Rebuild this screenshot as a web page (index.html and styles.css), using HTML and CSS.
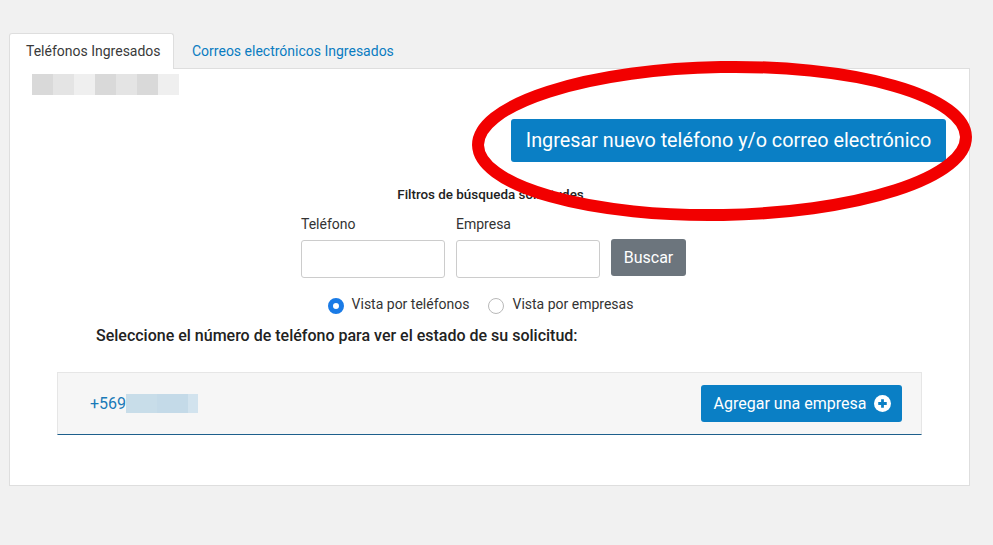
FILE: index.html
```html
<!DOCTYPE html>
<html lang="es">
<head>
<meta charset="utf-8">
<title>Teléfonos Ingresados</title>
<link rel="stylesheet" href="styles.css">
</head>
<body>
<div class="page">
  <div class="tabs">
    <div class="tab active">Teléfonos Ingresados</div>
    <div class="tab">Correos electrónicos Ingresados</div>
  </div>
  <div class="panel">
    <div class="blur-name">
      <span class="b1"></span><span class="b2"></span><span class="b3"></span><span class="b1"></span><span class="b2"></span><span class="b1"></span><span class="b3"></span>
    </div>
    <div class="top-actions">
      <button class="btn btn-primary btn-lg">Ingresar nuevo teléfono y/o correo electrónico</button>
    </div>
    <div class="filters">
      <div class="filters-title">Filtros de búsqueda solicitudes</div>
      <div class="filter-row">
        <div class="field">
          <label>Teléfono</label>
          <input type="text">
        </div>
        <div class="field">
          <label>Empresa</label>
          <input type="text">
        </div>
        <button class="btn btn-secondary">Buscar</button>
      </div>
      <div class="radios">
        <span class="radio checked"></span><span class="radio-label">Vista por teléfonos</span>
        <span class="radio"></span><span class="radio-label">Vista por empresas</span>
      </div>
    </div>
    <div class="select-title">Seleccione el número de teléfono para ver el estado de su solicitud:</div>
    <div class="card">
      <div class="phone">+569<span class="phone-blur"><i></i><i></i><i></i></span></div>
      <button class="btn btn-primary btn-add">Agregar una empresa
        <svg width="17" height="17" viewBox="0 0 16 16"><circle cx="8" cy="8" r="8" fill="#fff"/><path d="M8 4v8M4 8h8" stroke="#0a7fc5" stroke-width="2.6"/></svg>
      </button>
    </div>
  </div>
  <svg class="ring" width="520" height="180" viewBox="0 0 520 180"><ellipse cx="260" cy="91" rx="244" ry="74" fill="none" stroke="#f20000" stroke-width="12" transform="rotate(-1 260 91)"/></svg>
</div>
</body>
</html>
```
FILE: styles.css
```css
* { box-sizing: border-box; }
html, body { margin: 0; padding: 0; }
body {
  background: #f1f1f1;
  font-family: Roboto, "Liberation Sans", Arial, sans-serif;
  color: #212529;
  width: 993px;
  height: 545px;
  overflow: hidden;
}
.page {
  position: relative;
  padding: 33px 0 0 9px;
  width: 978px;
}
.tabs {
  display: flex;
  height: 35px;
  position: relative;
  z-index: 1;
}
.tab {
  font-size: 14px;
  line-height: 35px;
  padding: 0 17px;
  color: #0a7cc1;
  border: 1px solid transparent;
  border-bottom: none;
  white-space: nowrap;
}
.tab.active {
  background: #fff;
  color: #3a3a3a;
  border-color: #dedede;
  border-radius: 3px 3px 0 0;
  width: 165px;
  height: 36px;
  padding: 0 0 0 16px;
}
.panel {
  background: #fff;
  border: 1px solid #dedede;
  height: 418px;
  width: 961px;
  padding: 5px 0 0 22px;
}
.blur-name {
  display: flex;
  height: 21px;
  width: 147px;
}
.blur-name span { flex: 1; }
.b1 { background: #d9d9d9; }
.b2 { background: #e4e4e4; }
.b3 { background: #efefef; }
.top-actions {
  display: flex;
  justify-content: flex-end;
  padding-right: 23px;
  margin-top: 24px;
}
.btn {
  border: none;
  border-radius: 3px;
  font-family: inherit;
  color: #fff;
  cursor: pointer;
}
.btn-primary { background: #0a7fc5; }
.btn-lg {
  width: 435px;
  height: 43px;
  font-size: 19.8px;
  padding: 0;
}
.btn-secondary {
  background: #6c757d;
  font-size: 16px;
  width: 75px;
  height: 37px;
  margin-top: 23px;
  margin-left: 11px;
}
.filters {
  display: flex;
  flex-direction: column;
  align-items: center;
  margin-left: -22px;
  margin-top: 25px;
}
.filters-title {
  font-size: 13.4px;
  font-weight: 500;
  color: #222;
  margin-left: 2px;
}
.filter-row {
  display: flex;
  margin-top: 14px;
  margin-left: 8px;
}
.field {
  display: flex;
  flex-direction: column;
  margin-right: 11px;
}
.field:last-of-type { margin-right: 0; }
.field label {
  font-size: 14px;
  color: #333;
  line-height: 17px;
  margin-bottom: 7px;
}
.field input {
  width: 144px;
  height: 38px;
  border: 1px solid #ccc;
  border-radius: 3px;
  margin: 0;
}
.radios {
  display: flex;
  align-items: center;
  margin-top: 16px;
  margin-left: 1px;
  font-size: 14px;
  color: #333;
}
.radio {
  width: 16px;
  height: 16px;
  border-radius: 50%;
  border: 1px solid #b9b9b9;
  background: #fff;
  margin-top: 4px;
}
.radio.checked {
  border: 5px solid #1a7be6;
  background: #fff;
}
.radio-label { margin: 0 19px 0 8px; }
.select-title {
  font-size: 16px;
  font-weight: 500;
  color: #222;
  margin: 12px 0 0 64px;
}
.card {
  margin: 27px 47px 0 25px;
  height: 63px;
  background: #f6f6f6;
  border: 1px solid #e6e6e6;
  border-bottom: 1px solid #1d5f8c;
  display: flex;
  align-items: center;
  justify-content: space-between;
  padding: 0 19px 0 32px;
}
.phone {
  font-size: 16px;
  color: #1a7ab8;
  display: flex;
  align-items: center;
}
.phone-blur {
  display: flex;
  height: 19px;
  width: 72px;
}
.phone-blur i { flex: 3; background: #c8dde9; }
.phone-blur i:nth-child(2) { flex: 3; background: #c4dae8; }
.phone-blur i:nth-child(3) { flex: 1; background: #d2e3ee; }
.btn-add {
  width: 201px;
  height: 37px;
  font-size: 16px;
  display: flex;
  align-items: center;
  justify-content: center;
  gap: 8px;
  padding: 0 0 0 2px;
}
.btn-add svg { display: block; }
.ring {
  position: absolute;
  left: 462px;
  top: 50px;
  pointer-events: none;
}
```
